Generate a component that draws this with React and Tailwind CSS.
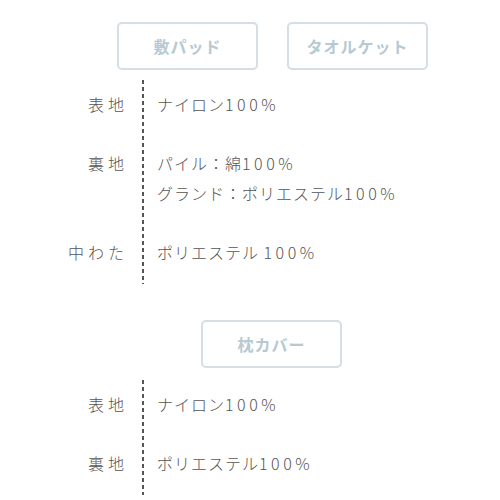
import React from 'react';

const font = { fontFamily: '"Noto Sans CJK JP", "Noto Sans", sans-serif' };

function Tab({ children, className = '' }) {
  return (
    <div
      className={
        'w-[141px] h-[48px] flex items-center justify-center rounded-[5px] border-2 border-[#d3dfe4] text-[16px] font-bold tracking-[1px] text-[#b7c9d1] ' +
        className
      }
    >
      {children}
    </div>
  );
}

function Num({ children }) {
  return <span className="tracking-[3.5px]">{children}</span>;
}

// 表: ラベル / 点線 / 値
function Spec({ rows, className = '' }) {
  return (
    <div className={'flex ' + className}>
      <div className="w-[128px] flex flex-col gap-[29px] pt-[9px] pb-[17px]">
        {rows.map((r, i) => (
          <div
            key={i}
            className="text-right text-[16px] leading-[30px] tracking-[4px] font-light text-[#555]"
            style={{ height: r.values.length * 30 + 'px' }}
          >
            {r.label}
          </div>
        ))}
      </div>
      <div className="w-[2px] ml-[14px] bg-[repeating-linear-gradient(to_bottom,#555_0_4px,transparent_4px_7px)]" />
      <div className="flex flex-col gap-[29px] pt-[9px] pb-[17px] pl-[13px]">
        {rows.map((r, i) => (
          <div key={i} className="flex flex-col">
            {r.values.map((v, j) => (
              <div key={j} className="text-[16px] leading-[30px] tracking-[1px] font-light text-[#555] whitespace-nowrap">
                {v}
              </div>
            ))}
          </div>
        ))}
      </div>
    </div>
  );
}

export default function App() {
  const bedRows = [
    { label: '表地', values: [<>ナイロン<Num>100%</Num></>] },
    { label: '裏地', values: [<>パイル：綿<Num>100%</Num></>, <>グランド：ポリエステル<Num>100%</Num></>] },
    { label: '中わた', values: [<>ポリエステル <Num>100%</Num></>] },
  ];
  const pillowRows = [
    { label: '表地', values: [<>ナイロン<Num>100%</Num></>] },
    { label: '裏地', values: [<>ポリエステル<Num>100%</Num></>] },
  ];

  return (
    <div className="w-[500px] h-[500px] bg-white overflow-hidden pt-[22px]" style={font}>
      <div className="flex gap-[29px] ml-[117px]">
        <Tab>敷パッド</Tab>
        <Tab>タオルケット</Tab>
      </div>
      <Spec rows={bedRows} className="mt-[10px]" />
      <Tab className="ml-[201px] mt-[36px]">枕カバー</Tab>
      <Spec rows={pillowRows} className="mt-[12px]" />
    </div>
  );
}
